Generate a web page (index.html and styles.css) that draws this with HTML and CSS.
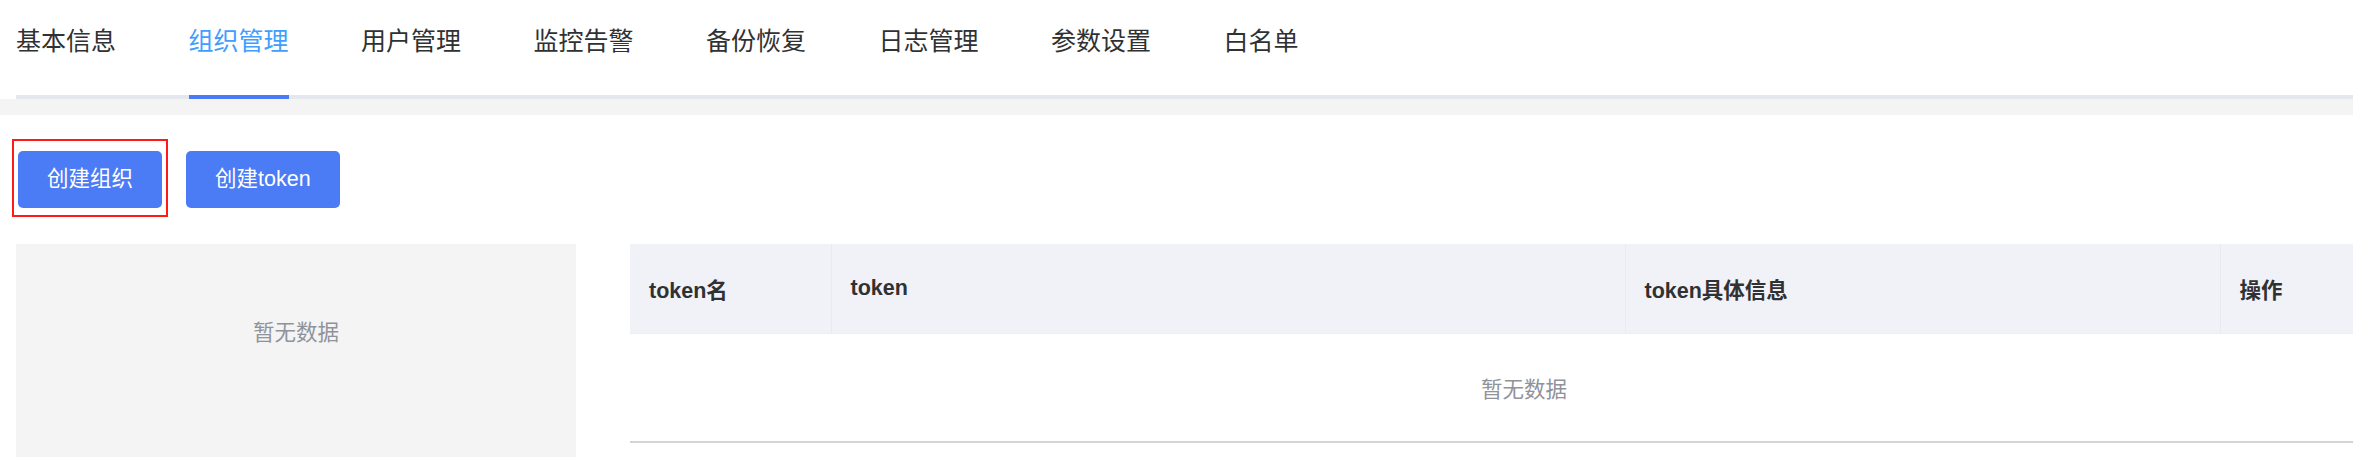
FILE: index.html
```html
<!DOCTYPE html>
<html lang="zh-CN">
<head>
    <meta charset="UTF-8">
    <meta name="viewport" content="width=device-width, initial-scale=1.0">
    <title>组织管理</title>
    <link rel="stylesheet" href="styles.css">
</head>
<body>

    <div class="header">
        <nav class="tabs">
            <div class="tab">基本信息</div>
            <div class="tab active">组织管理</div>
            <div class="tab">用户管理</div>
            <div class="tab">监控告警</div>
            <div class="tab">备份恢复</div>
            <div class="tab">日志管理</div>
            <div class="tab">参数设置</div>
            <div class="tab">白名单</div>
        </nav>
    </div>

    <div class="strip"></div>

    <div class="content">
        <div class="toolbar">
            <span class="marked"><button class="btn">创建组织</button></span>
            <button class="btn">创建token</button>
        </div>

        <div class="main">
            <div class="tree-panel">
                <div class="empty-text">暂无数据</div>
            </div>

            <table class="token-table">
                <colgroup>
                    <col class="col-name">
                    <col class="col-token">
                    <col class="col-info">
                    <col class="col-op">
                </colgroup>
                <thead>
                    <tr>
                        <th>token名</th>
                        <th>token</th>
                        <th>token具体信息</th>
                        <th>操作</th>
                    </tr>
                </thead>
                <tbody>
                    <tr>
                        <td colspan="4" class="empty-row">暂无数据</td>
                    </tr>
                </tbody>
            </table>
        </div>
    </div>

</body>
</html>
```

FILE: styles.css
```css
body {
    margin: 0;
    background-color: #fff;
    font-family: "Liberation Sans", "Noto Sans CJK SC", sans-serif;
    color: #303133;
    overflow: hidden;
}

/* top tabs */
.header {
    background-color: #fff;
}
.tabs {
    display: flex;
    align-items: flex-start;
    gap: 72.5px;
    margin-left: 16px;
    border-bottom: 4px solid #e4e7ed;
}
.tab {
    height: 95px;
    line-height: 83px;
    font-size: 25px;
    white-space: nowrap;
    color: #303133;
}
.tab.active {
    color: #409eff;
    border-bottom: 4px solid #4a7af5;
    margin-bottom: -4px;
}
.strip {
    height: 16px;
    background-color: #f4f4f5;
}

/* content */
.content {
    padding-top: 36px;
}
.toolbar {
    display: flex;
    gap: 24px;
    padding-left: 18px;
}
.btn {
    height: 57px;
    padding: 0 29px;
    border: 0;
    border-radius: 5px;
    background-color: #4b7bf5;
    color: #fff;
    font-family: inherit;
    font-size: 21.5px;
    line-height: 57px;
}
.marked {
    position: relative;
    display: inline-block;
    height: 57px;
}
.marked::after {
    content: "";
    position: absolute;
    top: -12px;
    left: -6px;
    right: -6px;
    bottom: -9px;
    border: 2px solid #ff1a1a;
}

.main {
    display: flex;
    align-items: flex-start;
    gap: 54px;
    margin-top: 36px;
    padding-left: 16px;
}
.tree-panel {
    flex: none;
    width: 560px;
    height: 260px;
    background-color: #f4f4f5;
    text-align: center;
}
.empty-text {
    padding-top: 78px;
    line-height: 22px;
    font-size: 21.5px;
    color: #909399;
}

/* table */
.token-table {
    flex: none;
    width: 1788px;
    border-collapse: collapse;
    table-layout: fixed;
    font-size: 21.5px;
}
.col-name { width: 201px; }
.col-token { width: 794px; }
.col-info { width: 595px; }
.col-op { width: 198px; }
.token-table th {
    height: 89px;
    padding: 0 19px;
    background-color: #f1f2f7;
    border-bottom: 1px solid #ebeef5;
    border-right: 1px solid #e8eaf0;
    text-align: left;
    font-weight: bold;
    color: #303133;
}
.token-table th:last-child {
    border-right: 0;
}
.empty-row {
    height: 107px;
    padding: 0;
    text-align: center;
    color: #909399;
    border-bottom: 2px solid #d4d4d4;
}
```
